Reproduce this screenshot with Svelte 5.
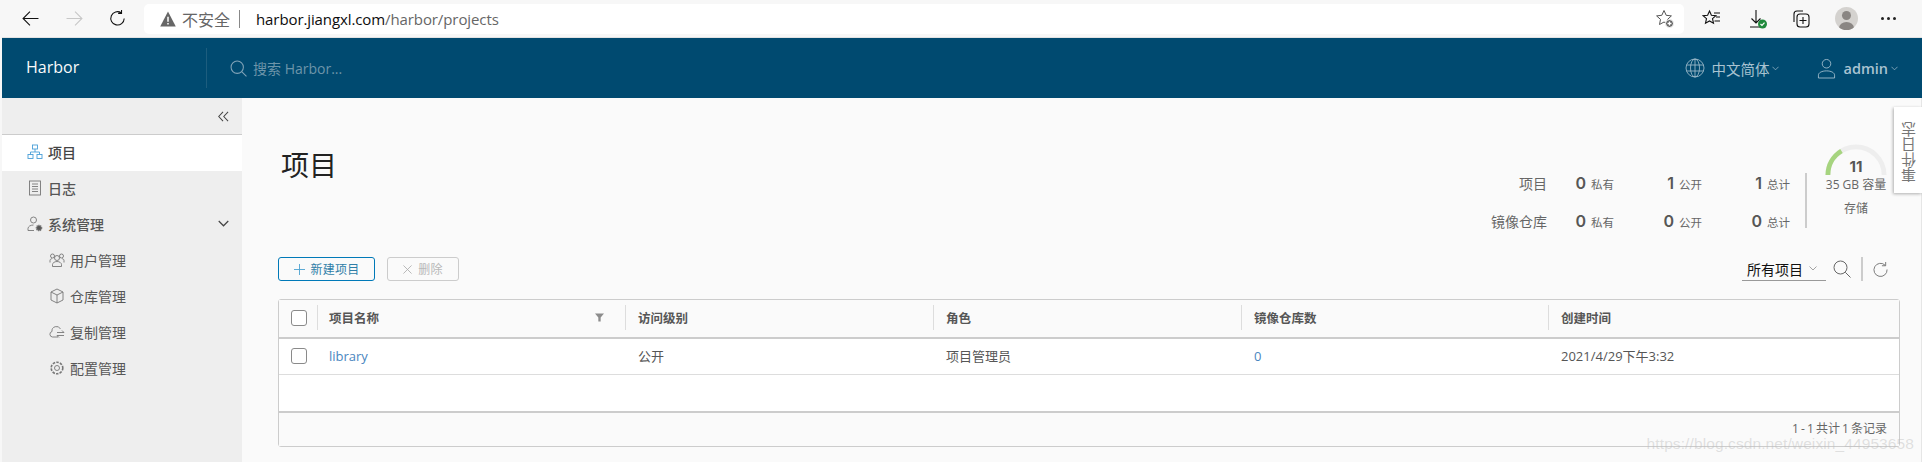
<script>
	const menu = [
		{ label: '用户管理', icon: 'users' },
		{ label: '仓库管理', icon: 'box' },
		{ label: '复制管理', icon: 'cloud' },
		{ label: '配置管理', icon: 'gear' }
	];
	const stats = [
		{ label: '项目', priv: 0, pub: 1, total: 1 },
		{ label: '镜像仓库', priv: 0, pub: 0, total: 0 }
	];
</script>

<div class="page">
	<div class="browser">
		<svg class="nav-ic back" viewBox="0 0 16 16"><path d="M15.500 8H1M7.500 1.500 1 8l6.500 6.500" /></svg>
		<svg class="nav-ic fwd" viewBox="0 0 16 16"><path d="M.5 8H15M8.500 1.500 15 8l-6.500 6.500" /></svg>
		<svg class="nav-ic reload" viewBox="0 0 16 16"><path d="M11.500 2.600A6.300 6.300 0 1 0 14.300 8M11.800 0v3.200H8.600" /></svg>
		<div class="address">
			<svg class="warn" viewBox="0 0 14 14"><path d="M7 .5 13.800 13.500H.2z" /><path class="warn-mark" d="M7 5v4.500M7 10.500v1.300" /></svg>
			<span class="insecure">不安全</span>
			<span class="addr-sep"></span>
			<span class="url"><b>harbor.jiangxl.com</b>/harbor/projects</span>
			<svg class="star-add" viewBox="0 0 20 20">
				<path d="M9 1.500l2.200 4.800 5.200.6-3.900 3.500 1 5.100L9 13l-4.500 2.500 1-5.100L1.600 6.900l5.200-.6z" />
				<circle cx="14.500" cy="14.500" r="4" />
				<path class="plus" d="M14.500 12.500v4M12.500 14.500h4" />
			</svg>
		</div>
		<svg class="tool fav" viewBox="0 0 20 20"><path d="M7.500 2l1.900 4.200 4.500.5-3.400 3 1 4.500-4-2.300-4 2.300 1-4.500-3.400-3 4.500-.5zM12 4h6M14 8h4M12.500 12H18" /></svg>
		<svg class="tool dl" viewBox="0 0 20 20">
			<path d="M8 1v13M3.500 9.500 8 14l4.500-4.500M2 18h10" />
			<circle class="ok" cx="14.500" cy="15" r="4.500" />
			<path class="tick" d="M12.500 15l1.500 1.500 2.500-2.800" />
		</svg>
		<svg class="tool coll" viewBox="0 0 20 20"><path d="M3 13V5a3 3 0 0 1 3-3h6" /><rect x="6" y="5" width="12" height="13" rx="3" /><path d="M12 8v7M8.500 11.500h7" /></svg>
		<div class="avatar"><span class="a-head"></span><span class="a-body"></span></div>
		<div class="more"><i></i><i></i><i></i></div>
	</div>

	<header class="top">
		<div class="brand">Harbor</div>
		<div class="search">
			<svg viewBox="0 0 16 16"><circle cx="6.800" cy="6.800" r="5.800" /><path d="M11 11l4.500 4.500" /></svg>
			<span>搜索 Harbor...</span>
		</div>
		<div class="top-right">
			<div class="lang">
				<svg viewBox="0 0 20 20"><circle cx="10" cy="10" r="9" /><ellipse cx="10" cy="10" rx="4.500" ry="9" /><path d="M10 1v18M1.500 7h17M1.500 13h17" /></svg>
				<span>中文简体</span>
				<svg class="caret" viewBox="0 0 8 5"><path d="M.5.500 4 4 7.500.500" /></svg>
			</div>
			<div class="user">
				<svg viewBox="0 0 20 22"><circle cx="10" cy="6" r="4.500" /><path d="M1.500 21v-3c0-2.500 3.500-4.500 8.500-4.500s8.500 2 8.500 4.500v3z" /></svg>
				<span>admin</span>
				<svg class="caret" viewBox="0 0 8 5"><path d="M.5.500 4 4 7.500.500" /></svg>
			</div>
		</div>
	</header>

	<div class="body">
		<aside class="side">
			<div class="collapse">
				<svg viewBox="0 0 12 12"><path d="M5.500 1 .8 6l4.700 5M11 1 6.300 6l4.700 5" /></svg>
			</div>
			<div class="nav-item active">
				<svg class="ic blue" viewBox="0 0 16 16"><rect x="5.500" y="1" width="5" height="4" /><rect x="1" y="10.500" width="5" height="4" /><rect x="10" y="10.500" width="5" height="4" /><path d="M8 5v3M3.500 10.500V8h9v2.500" /></svg>
				<span>项目</span>
			</div>
			<div class="nav-item">
				<svg class="ic" viewBox="0 0 16 16"><rect x="2.500" y="1" width="11" height="14" /><path d="M5 4h6M5 6.500h6M5 9h6M5 11.500h6" /></svg>
				<span>日志</span>
			</div>
			<div class="nav-item">
				<svg class="ic" viewBox="0 0 16 16"><circle cx="6.500" cy="4" r="3" /><path d="M1 14.500v-2c0-2 2.500-3.500 5.500-3.500M1 14.500h6" /><circle class="cog" cx="12" cy="12" r="2.500" /></svg>
				<span>系统管理</span>
				<svg class="chev" viewBox="0 0 12 7"><path d="M.8.800 6 6l5.200-5.200" /></svg>
			</div>
			{#each menu as m}
				<div class="nav-item sub">
					<svg class="ic" viewBox="0 0 16 16">
						{#if m.icon === 'users'}
							<circle cx="8" cy="6" r="2.500" /><circle cx="3.500" cy="4" r="2" /><circle cx="12.500" cy="4" r="2" /><path d="M3.500 14.500v-2c0-1.500 2-3 4.500-3s4.500 1.500 4.500 3v2zM1 10.500V8.500c0-1 1-1.800 2-1.800M15 10.500V8.500c0-1-1-1.800-2-1.800" />
						{:else if m.icon === 'box'}
							<path d="M8 1l6 3v8l-6 3-6-3V4zM2 4l6 3 6-3M8 7v8" />
						{:else if m.icon === 'cloud'}
							<path d="M9 13H3.500a2.800 2.800 0 0 1-.5-5.500A4.500 4.500 0 0 1 11.500 5M8 8.500h7M13 6.500l2 2M8 11.500h7M10 13.500l-2-2" />
						{:else}
							<circle cx="8" cy="8" r="2.500" /><circle class="dash" cx="8" cy="8" r="5.800" />
						{/if}
					</svg>
					<span>{m.label}</span>
				</div>
			{/each}
		</aside>

		<main class="main">
			<div class="head-row">
				<h1>项目</h1>
				<div class="summary">
					<div class="stat-grid">
						{#each stats as s}
							<span class="stat-label">{s.label}</span>
							<span class="stat"><b>{s.priv}</b>私有</span>
							<span class="stat"><b>{s.pub}</b>公开</span>
							<span class="stat"><b>{s.total}</b>总计</span>
						{/each}
					</div>
					<div class="storage">
						<div class="gauge">
							<svg viewBox="0 0 64 34">
								<path class="track" d="M3 33a29 29 0 0 1 58 0" />
								<path class="fill" d="M3 33A29 29 0 0 1 17 8.200" />
							</svg>
							<span>11</span>
						</div>
						<div class="cap">35 GB 容量</div>
						<div class="cap-label">存储</div>
					</div>
				</div>
			</div>

			<div class="toolbar">
				<button class="btn primary">
					<svg viewBox="0 0 12 12"><path d="M6 0v12M0 6h12" /></svg>新建项目
				</button>
				<button class="btn disabled">
					<svg viewBox="0 0 10 10"><path d="M.5.500l9 9M9.500.500l-9 9" /></svg>删除
				</button>
				<div class="tools">
					<div class="select">所有项目<svg viewBox="0 0 8 5"><path d="M.5.500 4 4 7.500.500" /></svg></div>
					<svg class="t-search" viewBox="0 0 18 18"><circle cx="7.500" cy="7.500" r="6.500" /><path d="M12.300 12.300 17.500 17.500" /></svg>
					<span class="t-sep"></span>
					<svg class="t-refresh" viewBox="0 0 16 16"><path d="M13 3.500A7 7 0 1 0 15 8M13.500 0v4h-4" /></svg>
				</div>
			</div>

			<div class="table">
				<div class="row thead">
					<div class="c check"><span class="box"></span></div>
					<div class="c name">项目名称<svg class="filter" viewBox="0 0 10 9"><path d="M0 0h10L6.300 4.500V9H3.700V4.500z" /></svg></div>
					<div class="c w">访问级别</div>
					<div class="c w">角色</div>
					<div class="c w2">镜像仓库数</div>
					<div class="c grow">创建时间</div>
				</div>
				<div class="row tr">
					<div class="c check"><span class="box"></span></div>
					<div class="c name"><span class="link">library</span></div>
					<div class="c w">公开</div>
					<div class="c w">项目管理员</div>
					<div class="c w2"><span class="link">0</span></div>
					<div class="c grow">2021/4/29下午3:32</div>
				</div>
				<div class="blank"></div>
				<div class="foot"><span>1 - 1 共计 1 条记录</span></div>
			</div>
		</main>
	</div>

	<div class="event-tab"><span>事件日志</span></div>
	<div class="watermark">https://blog.csdn.net/weixin_44953658</div>
</div>

<style>
	:global(body) {
		margin: 0;
		background: #fafafa;
	}
	.page {
		position: relative;
		width: 1922px;
		height: 462px;
		overflow: hidden;
		display: flex;
		flex-direction: column;
		padding-left: 2px;
		box-sizing: border-box;
		font-family: 'Open Sans', 'Noto Sans CJK SC', sans-serif;
		color: #565656;
		font-size: 13px;
		background: #f7f7f7;
	}
	svg {
		display: block;
		fill: none;
		stroke: currentColor;
		flex: none;
	}

	/* browser chrome */
	.browser {
		height: 38px;
		flex: none;
		display: flex;
		align-items: center;
		box-sizing: border-box;
		border-bottom: 1px solid #e3e3e3;
		background: #f7f7f7;
		color: #111;
	}
	.nav-ic {
		width: 17px;
		height: 17px;
		stroke-width: 1;
	}
	.back {
		margin-left: 20px;
	}
	.fwd {
		margin-left: 27px;
		color: #c8c8c8;
	}
	.reload {
		margin-left: 26px;
	}
	.address {
		margin-left: 18px;
		width: 1540px;
		height: 30px;
		background: #fff;
		border-radius: 5px;
		display: flex;
		align-items: center;
		font-size: 15px;
		color: #666;
	}
	.warn {
		width: 16px;
		height: 16px;
		margin-left: 16px;
		fill: #666;
		stroke: none;
	}
	.warn-mark {
		stroke: #fff;
		stroke-width: 1.300;
		fill: none;
	}
	.insecure {
		margin-left: 6px;
		font-size: 16px;
	}
	.addr-sep {
		width: 1px;
		height: 18px;
		background: #888;
		margin: 0 16px 0 9px;
	}
	.url {
		font-size: 15px;
		letter-spacing: -0.1px;
	}
	.url b {
		font-weight: 400;
		color: #0d0d0d;
	}
	.star-add {
		margin-left: auto;
		margin-right: 9px;
		width: 20px;
		height: 20px;
		color: #555;
	}
	.star-add circle {
		fill: #666;
		stroke: #fff;
	}
	.star-add .plus {
		stroke: #fff;
		stroke-width: 1.300;
	}
	.tool {
		width: 20px;
		height: 20px;
		stroke-width: 1.100;
		color: #111;
	}
	.fav {
		margin-left: 18px;
	}
	.dl {
		margin-left: 26px;
	}
	.ok {
		fill: #1f8a3c;
		stroke: none;
	}
	.tick {
		stroke: #fff;
		stroke-width: 1.200;
	}
	.coll {
		margin-left: 23px;
	}
	.avatar {
		margin-left: 24px;
		width: 23px;
		height: 23px;
		border-radius: 50%;
		background: #d4d2cf;
		position: relative;
		overflow: hidden;
	}
	.a-head {
		position: absolute;
		left: 7px;
		top: 4px;
		width: 9px;
		height: 9px;
		border-radius: 50%;
		background: #8a8683;
	}
	.a-body {
		position: absolute;
		left: 4px;
		top: 15px;
		width: 15px;
		height: 12px;
		border-radius: 50%;
		background: #8a8683;
	}
	.more {
		margin-left: 23px;
		display: flex;
		gap: 3px;
	}
	.more i {
		width: 3px;
		height: 3px;
		border-radius: 50%;
		background: #222;
	}

	/* app header */
	.top {
		height: 60px;
		flex: none;
		background: #004a70;
		display: flex;
		align-items: center;
		color: #fff;
	}
	.brand {
		width: 205px;
		padding-left: 24px;
		box-sizing: border-box;
		font-size: 16px;
		line-height: 38px;
		border-right: 1px solid #1d5d7e;
		height: 40px;
		color: #fafafa;
	}
	.search {
		display: flex;
		align-items: center;
		gap: 6px;
		margin-left: 23px;
		color: #6d95aa;
		font-size: 14px;
	}
	.search svg {
		width: 17px;
		height: 17px;
		color: #80a3b7;
		stroke-width: 1;
	}
	.top-right {
		margin-left: auto;
		display: flex;
		align-items: center;
		color: #a9c3d1;
		font-size: 14.500px;
	}
	.lang,
	.user {
		display: flex;
		align-items: center;
	}
	.lang svg:first-child {
		width: 20px;
		height: 20px;
		margin-right: 6px;
		stroke-width: 0.800;
	}
	.user {
		margin-left: 38px;
		margin-right: 24px;
		font-weight: 600;
	}
	.user svg:first-child {
		width: 19px;
		height: 21px;
		margin-right: 7px;
		stroke-width: 0.900;
	}
	.caret {
		width: 7px;
		height: 5px;
		margin-left: 3px;
		stroke-width: 0.800;
	}

	/* body */
	.body {
		flex: 1;
		display: flex;
		min-height: 0;
		background: #fafafa;
		border-right: 1px solid #e6e6e6;
	}
	.side {
		width: 240px;
		flex: none;
		background: #eee;
	}
	.collapse {
		height: 37px;
		box-sizing: border-box;
		border-bottom: 1px solid #ccc;
		display: flex;
		align-items: center;
		justify-content: flex-end;
		padding-right: 13px;
		color: #444;
	}
	.collapse svg {
		width: 11px;
		height: 11px;
		stroke-width: 1.100;
	}
	.nav-item {
		height: 36px;
		box-sizing: border-box;
		padding: 0 0 3px 25px;
		display: flex;
		align-items: center;
		font-size: 14px;
		color: #565656;
		font-weight: 500;
	}
	.nav-item.active {
		background: #fff;
		color: #444;
	}
	.nav-item.sub {
		padding-left: 47px;
		font-weight: 400;
	}
	.ic {
		width: 16px;
		height: 16px;
		margin-right: 5px;
		stroke-width: 0.900;
		color: #777;
	}
	.ic.blue {
		color: #4a9fd8;
	}
	.cog {
		fill: #555;
		stroke-dasharray: 1.200 0.600;
		stroke-width: 1.600;
	}
	.dash {
		stroke-dasharray: 2.500 1.200;
		stroke-width: 1.600;
	}
	.chev {
		width: 11px;
		height: 7px;
		margin-left: auto;
		margin-right: 13px;
		stroke-width: 1.300;
		color: #444;
	}

	/* main */
	.main {
		flex: 1;
		min-width: 0;
		padding: 0 21px 0 36px;
		box-sizing: border-box;
	}
	.head-row {
		display: flex;
		justify-content: space-between;
		height: 159px;
	}
	h1 {
		margin: 50px 0 0 3px;
		font-size: 28px;
		font-weight: 400;
		line-height: 34px;
		color: #222;
	}
	.summary {
		display: flex;
		align-items: flex-start;
		margin-top: 17px;
		margin-right: 1px;
	}
	.stat-grid {
		display: grid;
		grid-template-columns: auto 67px 88px 88px;
		grid-auto-rows: 38px;
		align-items: center;
		margin-top: 49px;
		margin-right: 15px;
		color: #666;
	}
	.stat-label {
		text-align: right;
		font-size: 14px;
	}
	.stat {
		text-align: right;
		font-size: 11.500px;
	}
	.stat b {
		font-size: 16px;
		font-weight: 600;
		margin-right: 5px;
		color: #565656;
		font-family: 'Inter', 'Open Sans', sans-serif;
	}
	.storage {
		border-left: 2px solid #ccc;
		margin-top: 58px;
		height: 55px;
		width: 94px;
		display: flex;
		flex-direction: column;
		align-items: center;
		position: relative;
		font-size: 12px;
		color: #666;
		padding-left: 6px;
		box-sizing: border-box;
	}
	.gauge {
		position: absolute;
		top: -30px;
		left: 18px;
		width: 62px;
		height: 33px;
	}
	.gauge svg {
		width: 62px;
		height: 33px;
		overflow: visible;
	}
	.gauge .track {
		stroke: #eee;
		stroke-width: 5;
	}
	.gauge .fill {
		stroke: #a6d47f;
		stroke-width: 5;
	}
	.gauge span {
		position: absolute;
		left: 0;
		right: 0;
		top: 15px;
		text-align: center;
		font-size: 15px;
		font-weight: 700;
		line-height: 18px;
		color: #565656;
		font-family: 'Inter', sans-serif;
	}
	.cap {
		margin-top: 3px;
		line-height: 18px;
		white-space: nowrap;
		font-size: 12px;
	}
	.cap-label {
		margin-top: 6px;
		line-height: 18px;
	}

	/* toolbar */
	.toolbar {
		height: 42px;
		display: flex;
		align-items: flex-start;
	}
	.btn {
		height: 24px;
		margin: 0 12px 0 0;
		padding: 0;
		box-sizing: border-box;
		border-radius: 3px;
		background: transparent;
		font: inherit;
		font-size: 12px;
		display: flex;
		align-items: center;
		justify-content: center;
		letter-spacing: 0.2px;
	}
	.btn.primary {
		width: 97px;
		border: 1px solid #0079b8;
		color: #2f7ea8;
		gap: 6px;
	}
	.btn.primary svg {
		width: 11px;
		height: 11px;
		color: #4fa3d1;
	}
	.btn.disabled {
		width: 72px;
		border: 1px solid #ccc;
		color: #b8b8b8;
		gap: 6px;
	}
	.btn.disabled svg {
		width: 9px;
		height: 9px;
		color: #aaa;
		stroke-width: 0.900;
	}
	.tools {
		margin-left: auto;
		display: flex;
		align-items: center;
		height: 24px;
		margin-right: 12px;
		color: #666;
	}
	.select {
		width: 84px;
		height: 24px;
		box-sizing: border-box;
		border-bottom: 1px solid #999;
		display: flex;
		align-items: center;
		padding-left: 5px;
		font-size: 14px;
		color: #111;
	}
	.select svg {
		width: 8px;
		height: 5px;
		margin-left: 6px;
		color: #999;
		stroke-width: 0.900;
	}
	.t-search {
		width: 18px;
		height: 18px;
		margin-left: 7px;
		stroke-width: 1;
	}
	.t-sep {
		width: 2px;
		height: 24px;
		background: #ccc;
		margin: 0 10px;
	}
	.t-refresh {
		width: 15px;
		height: 15px;
		stroke-width: 0.900;
	}

	/* table */
	.table {
		box-sizing: border-box;
		height: 148px;
		border: 1px solid #ccc;
		border-radius: 3px;
		display: flex;
		flex-direction: column;
		background: #fafafa;
	}
	.row {
		display: flex;
		align-items: center;
	}
	.thead {
		height: 39px;
		flex: none;
		box-sizing: border-box;
		padding-bottom: 2px;
		border-bottom: 2px solid #ccc;
		font-weight: 600;
		font-size: 12.500px;
		background: #fafafa;
	}
	.thead .c + .c {
		border-left: 1px solid #ddd;
		height: 25px;
	}
	.tr {
		height: 36px;
		flex: none;
		box-sizing: border-box;
		padding-bottom: 2px;
		background: #fff;
		border-bottom: 1px solid #ddd;
		font-size: 13px;
	}
	.blank {
		height: 36px;
		flex: none;
		background: #fff;
		border-bottom: 2px solid #ccc;
		box-sizing: content-box;
	}
	.c {
		box-sizing: border-box;
		display: flex;
		align-items: center;
		padding-left: 12px;
		height: 100%;
	}
	.tr .c + .c {
		border-left: 1px solid transparent;
	}
	.check {
		width: 38px;
		padding-left: 12px;
	}
	.box {
		width: 16px;
		height: 16px;
		box-sizing: border-box;
		border: 1px solid #8a8a8a;
		border-radius: 3px;
		background: #fff;
	}
	.name {
		width: 308px;
		position: relative;
		padding-left: 11px;
	}
	.w {
		width: 308px;
	}
	.w2 {
		width: 307px;
	}
	.grow {
		flex: 1;
	}
	.filter {
		width: 9px;
		height: 9px;
		margin-left: auto;
		margin-right: 21px;
		fill: #8c8c8c;
		stroke: none;
	}
	.link {
		color: #4a86c0;
	}
	.foot {
		flex: 1;
		display: flex;
		align-items: flex-start;
		justify-content: flex-end;
		padding: 9px 12px 0 0;
		font-size: 12px;
		line-height: 14px;
		word-spacing: -1px;
		background: #fafafa;
		color: #666;
	}

	/* overlays */
	.event-tab {
		position: absolute;
		right: 0;
		top: 107px;
		width: 28px;
		height: 86px;
		box-sizing: border-box;
		padding-top: 4px;
		background: #fff;
		box-shadow: -1px 1px 3px rgba(0, 0, 0, 0.3);
		display: flex;
		align-items: center;
		justify-content: center;
	}
	.event-tab span {
		writing-mode: vertical-rl;
		transform: rotate(180deg);
		font-size: 15px;
		color: #777;
	}
	.watermark {
		position: absolute;
		right: 8px;
		top: 436px;
		line-height: 15px;
		font-family: 'Liberation Sans', sans-serif;
		font-size: 15.500px;
		color: rgba(190, 190, 190, 0.45);
		letter-spacing: 0.1px;
		white-space: nowrap;
		pointer-events: none;
	}
</style>
